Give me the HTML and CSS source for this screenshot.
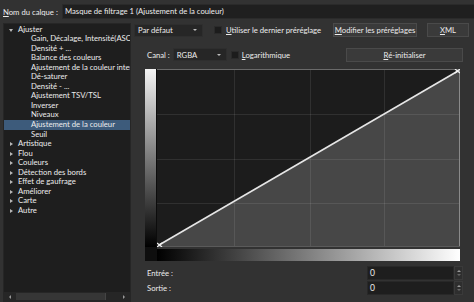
FILE: index.html
```html
<!DOCTYPE html>
<html>
<head>
<meta charset="utf-8">
<link rel="stylesheet" href="styles.css">
</head>
<body>
<div class="app">
  <div class="namerow">
    <span class="namelabel"><u>N</u>om du calque :</span>
    <div class="nameinput">Masque de filtrage 1 (Ajustement de la couleur)</div>
  </div>
  <div class="main">
    <div class="treepanel">
      <div class="tree">
        <div class="item top"><span class="arrow down"></span>Ajuster</div>
        <div class="item child">Gain, Décalage, Intensité(ASC-CDL)</div>
        <div class="item child">Densité + ...</div>
        <div class="item child">Balance des couleurs</div>
        <div class="item child">Ajustement de la couleur interactif</div>
        <div class="item child">Dé-saturer</div>
        <div class="item child">Densité - ...</div>
        <div class="item child">Ajustement TSV/TSL</div>
        <div class="item child">Inverser</div>
        <div class="item child">Niveaux</div>
        <div class="item child selected">Ajustement de la couleur</div>
        <div class="item child">Seuil</div>
        <div class="item top"><span class="arrow right"></span>Artistique</div>
        <div class="item top"><span class="arrow right"></span>Flou</div>
        <div class="item top"><span class="arrow right"></span>Couleurs</div>
        <div class="item top"><span class="arrow right"></span>Détection des bords</div>
        <div class="item top"><span class="arrow right"></span>Effet de gaufrage</div>
        <div class="item top"><span class="arrow right"></span>Améliorer</div>
        <div class="item top"><span class="arrow right"></span>Carte</div>
        <div class="item top"><span class="arrow right"></span>Autre</div>
      </div>
      <div class="hscroll">
        <span class="sarrow left"></span>
        <div class="strack"><div class="sthumb"></div></div>
        <span class="sarrow rightarr"></span>
      </div>
    </div>
    <div class="right">
      <div class="row1">
        <div class="combo combo-preset"><span>Par défaut</span><span class="caret"></span></div>
        <div class="check check-last"><span class="box"></span><span><u>U</u>tiliser le dernier préréglage</span></div>
        <div class="btn btn-modify"><u>M</u>odifier les préréglages</div>
        <div class="btn btn-xml"><u>X</u>ML</div>
      </div>
      <div class="row2">
        <span class="canal">Canal :</span>
        <div class="combo combo-canal"><span>RGBA</span><span class="caret"></span></div>
        <div class="check check-log"><span class="box"></span><span><u>L</u>ogarithmique</span></div>
        <div class="btn btn-reset"><u>R</u>é-initialiser</div>
      </div>
      <div class="curvebox">
        <div class="vbar"></div>
        <div class="graph">
          <svg width="303" height="178" viewBox="0 0 303 178">
            <rect x="0" y="0" width="303" height="178" fill="#1c1c1c"/>
            <polygon points="1,177 302,1 302,178 0,178" fill="#474747"/>
            <g stroke="rgba(255,255,255,0.09)" stroke-width="1">
              <line x1="77.5" y1="0" x2="77.5" y2="178"/>
              <line x1="153.5" y1="0" x2="153.5" y2="178"/>
              <line x1="227.5" y1="0" x2="227.5" y2="178"/>
              <line x1="0" y1="45.5" x2="303" y2="45.5"/>
              <line x1="0" y1="90.5" x2="303" y2="90.5"/>
              <line x1="0" y1="134.5" x2="303" y2="134.5"/>
            </g>
            <line x1="0" y1="0.5" x2="303" y2="0.5" stroke="#6a6a6a"/>
            <line x1="302.5" y1="0" x2="302.5" y2="178" stroke="#8a8a8a"/>
            <line x1="0" y1="177.5" x2="303" y2="177.5" stroke="#5a5a5a"/>
            <line x1="2" y1="176" x2="301" y2="2" stroke="#e6e6e6" stroke-width="1.6"/>
            <g stroke="#f4f4f4" stroke-width="1.2">
              <line x1="0" y1="174" x2="5" y2="178"/>
              <line x1="0" y1="178" x2="5" y2="174"/>
              <line x1="298" y1="0" x2="303" y2="4"/>
              <line x1="298" y1="4" x2="303" y2="0"/>
            </g>
          </svg>
        </div>
        <div class="corner"></div>
        <div class="hbar"></div>
      </div>
      <div class="io">
        <div class="iorow">
          <span class="iolabel">Entrée :</span>
          <div class="spin"><div class="spinval">0</div><div class="spinbtns"><span class="up"></span><span class="down"></span></div></div>
        </div>
        <div class="iorow">
          <span class="iolabel">Sortie :</span>
          <div class="spin"><div class="spinval">0</div><div class="spinbtns"><span class="up"></span><span class="down"></span></div></div>
        </div>
      </div>
    </div>
  </div>
</div>
</body>
</html>
```
FILE: styles.css
```css
* { box-sizing: border-box; }
html, body {
  margin: 0;
  padding: 0;
  background: #323232;
}
body {
  width: 474px;
  height: 302px;
  overflow: hidden;
  font-family: Lato, "Noto Sans", sans-serif;
  font-size: 7.7px;
  color: #ececec;
  white-space: nowrap;
}
u { text-decoration: underline; text-underline-offset: 1px; }

.app {
  display: flex;
  flex-direction: column;
  height: 302px;
}

.namerow {
  display: flex;
  align-items: center;
  height: 20px;
  padding: 3px 0 0 3px;
}
.namelabel {
  width: 59px;
  flex: none;
}
.nameinput {
  flex: 1;
  height: 15px;
  background: #1f1f1f;
  border: 1px solid #2a2a2a;
  border-right: none;
  line-height: 13px;
  padding-left: 2px;
  overflow: hidden;
}

.main {
  flex: 1;
  display: flex;
  padding: 3px 0 0 3px;
  min-height: 0;
}

.treepanel {
  width: 128px;
  flex: none;
  background: #1e1e1e;
  display: flex;
  flex-direction: column;
  border: 1px solid #262626;
}
.tree {
  flex: 1;
  padding-top: 0.5px;
  overflow: hidden;
}
.item {
  height: 9.55px;
  line-height: 9.55px;
  overflow: hidden;
  position: relative;
}
.item.top { padding-left: 14px; }
.item.child { padding-left: 27px; }
.item.selected {
  background: #3d5b7b;
}
.arrow {
  display: inline-block;
  width: 0;
  height: 0;
  position: absolute;
  top: 3px;
}
.arrow.down {
  left: 5px;
  top: 4px;
  border-left: 2.5px solid transparent;
  border-right: 2.5px solid transparent;
  border-top: 3px solid #b8b8b8;
}
.arrow.right {
  left: 6px;
  border-top: 2.5px solid transparent;
  border-bottom: 2.5px solid transparent;
  border-left: 3px solid #b8b8b8;
}

.hscroll {
  height: 9px;
  flex: none;
  display: flex;
  align-items: center;
  background: #262626;
  padding: 0 2px;
  gap: 2px;
}
.sarrow {
  width: 0;
  height: 0;
  border-top: 2px solid transparent;
  border-bottom: 2px solid transparent;
  flex: none;
}
.sarrow.left { border-right: 2px solid #9a9a9a; margin-left: 3px; }
.sarrow.rightarr { border-left: 2px solid #9a9a9a; margin-right: 3px; }
.strack {
  flex: 1;
  height: 7px;
  display: flex;
  padding: 0 3px;
}
.sthumb {
  width: 90px;
  height: 7px;
  background: #363636;
  border-right: 1px solid #444;
}

.right {
  flex: 1;
  display: flex;
  flex-direction: column;
  padding-left: 3px;
}

.row1 {
  display: flex;
  align-items: center;
  height: 14px;
}
.combo {
  display: flex;
  align-items: center;
  justify-content: space-between;
  height: 13px;
  background: #262626;
  border: 1px solid #2e2e2e;
  padding: 0 5px 0 3px;
  flex: none;
}
.combo-preset { width: 69px; }
.caret {
  width: 0;
  height: 0;
  border-left: 2px solid transparent;
  border-right: 2px solid transparent;
  border-top: 2px solid #bbb;
}
.check {
  display: flex;
  align-items: center;
  gap: 4px;
  flex: none;
}
.check-last { margin-left: 11px; width: 118px; }
.box {
  width: 8px;
  height: 8px;
  background: #1c1c1c;
  border: 1px solid #2a2a2a;
  flex: none;
}
.btn {
  height: 14px;
  background: #3a3a3a;
  border: 1px solid #4a4a4a;
  display: flex;
  align-items: center;
  justify-content: center;
  flex: none;
}
.btn-modify { width: 84px; margin-left: 1px; }
.btn-xml { width: 42px; margin-left: 10px; }

.row2 {
  display: flex;
  align-items: center;
  height: 15px;
  margin-top: 10px;
  padding-left: 13px;
}
.canal { flex: none; margin-right: 3px; }
.combo-canal { width: 54px; }
.check-log { margin-left: 4px; gap: 3px; }
.btn-reset { width: 117px; margin-left: auto; margin-right: 11px; }

.curvebox {
  display: grid;
  grid-template-columns: 12px 303px;
  grid-template-rows: 178px 14px;
  margin-top: 7px;
  margin-left: 11px;
}
.vbar {
  background: linear-gradient(to bottom, #f4f4f4, #000 100%);
  border-right: 1px solid #0c0c0c;
}
.graph svg { display: block; }
.corner { background: #0e0e0e; }
.hbar {
  margin-top: 2px;
  background: linear-gradient(to right, #000, #fff);
}

.io {
  display: flex;
  flex-direction: column;
  gap: 1px;
  margin-top: 5px;
  padding-left: 13px;
}
.iorow {
  display: flex;
  align-items: center;
  height: 14px;
}
.iolabel { flex: 1; }
.spin {
  display: flex;
  width: 96px;
  height: 14px;
  margin-right: 11px;
}
.spinval {
  flex: 1;
  background: #1e1e1e;
  border: 1px solid #282828;
  line-height: 12px;
  padding-left: 2px;
  font-size: 8.5px;
}
.spinbtns {
  width: 9px;
  display: flex;
  flex-direction: column;
  align-items: center;
  justify-content: center;
  gap: 2px;
  background: #2e2e2e;
  border: 1px solid #3a3a3a;
}
.spinbtns .up {
  width: 0; height: 0;
  border-left: 2px solid transparent;
  border-right: 2px solid transparent;
  border-bottom: 2px solid #999;
}
.spinbtns .down {
  width: 0; height: 0;
  border-left: 2px solid transparent;
  border-right: 2px solid transparent;
  border-top: 2px solid #666;
}
```
